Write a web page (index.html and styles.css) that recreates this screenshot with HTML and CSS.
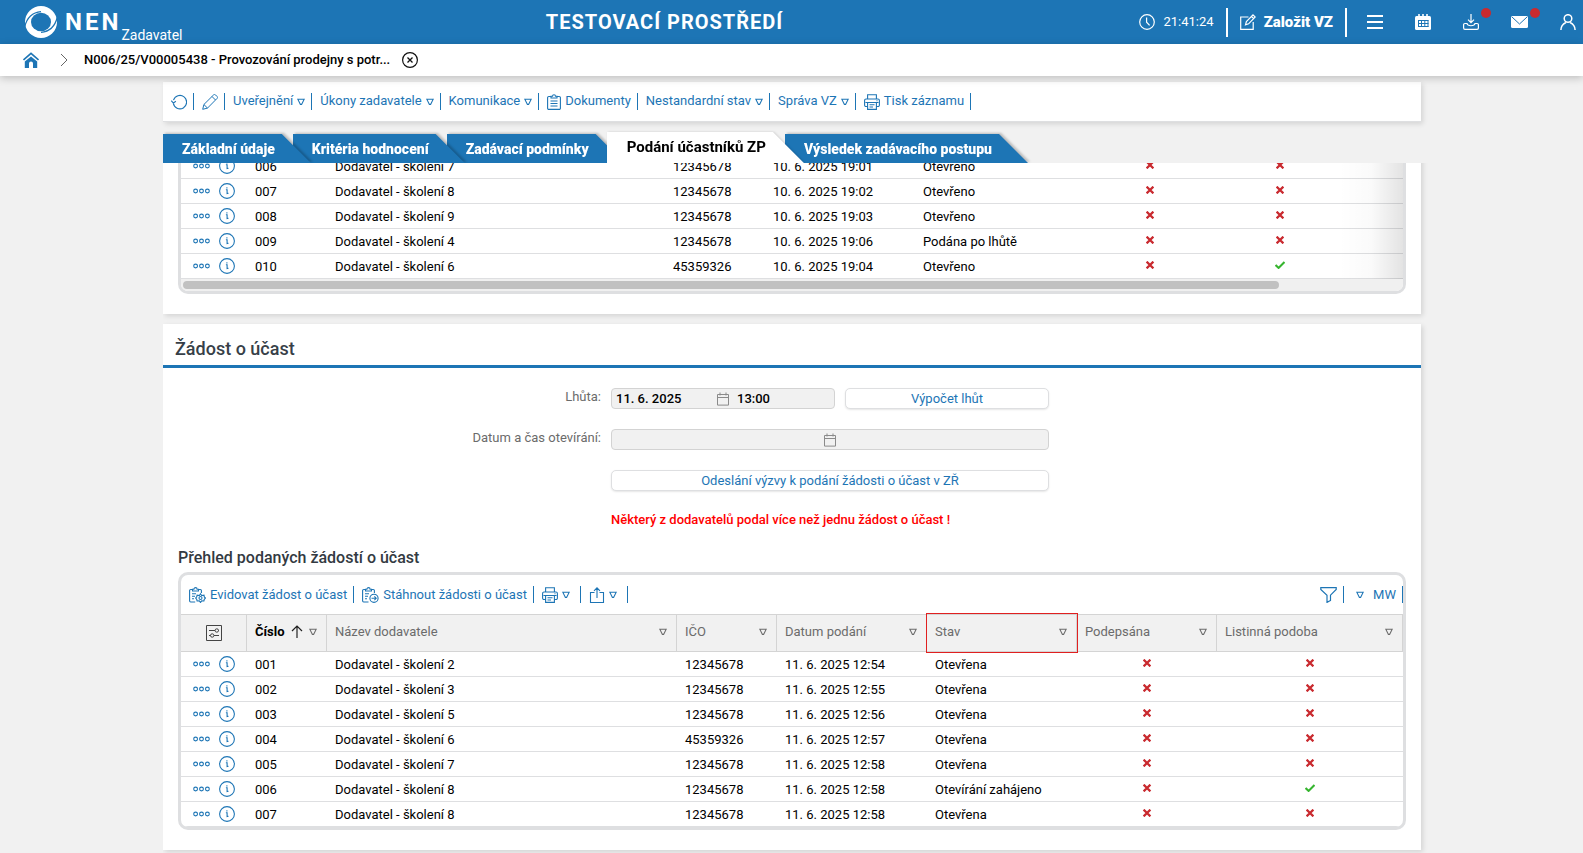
FILE: index.html
```html
<!DOCTYPE html>
<html lang="cs">
<head>
<meta charset="utf-8">
<title>NEN – Podání účastníků ZP</title>
<link rel="stylesheet" href="styles.css">
</head>
<body>
<svg class="sprite" aria-hidden="true">
  <symbol id="tri" viewBox="0 0 8 8"><path d="M.8 1.2h6.4L4.6 6.4H3.4z" fill="none" stroke="currentColor" stroke-width="1.1"/></symbol>
  <symbol id="dots" viewBox="0 0 17 6"><g fill="none" stroke="currentColor" stroke-width="1.1"><circle cx="2.6" cy="3" r="1.9"/><circle cx="8.5" cy="3" r="1.9"/><circle cx="14.4" cy="3" r="1.9"/></g></symbol>
  <symbol id="info" viewBox="0 0 16 16"><circle cx="8" cy="8" r="7.4" fill="none" stroke="currentColor" stroke-width="1.1"/><path d="M6.9 6.8h1.2v3.7l1.4-.3M7.9 4.2v1.2" fill="none" stroke="currentColor" stroke-width="1.1"/></symbol>
  <symbol id="no" viewBox="0 0 10 8"><path d="M1.6.6l6.8 6.8M8.4.6L1.6 7.4" stroke="#c92a2f" stroke-width="2.2" fill="none"/></symbol>
  <symbol id="yes" viewBox="0 0 10 8"><path d="M.6 4l3 2.900L9.500.9" stroke="#36b52f" stroke-width="2.100" fill="none"/></symbol>
  <symbol id="calendar" viewBox="0 0 12 14"><path d="M.5 2.500h11v10.600H.5zM.5 5.500h11M3 .5v3M9 .5v3" fill="none" stroke="currentColor"/></symbol>
  <symbol id="printer" viewBox="0 0 16 16"><g fill="none" stroke="currentColor" stroke-width="1.1"><path d="M3.600 5V.7h8.800V5M3.500 12.500H2A1.400 1.400 0 0 1 .6 11V6.400A1.400 1.400 0 0 1 2 5h12a1.400 1.400 0 0 1 1.400 1.400V11a1.400 1.400 0 0 1-1.400 1.500h-1.500M3.600 8.500h8.800v6.900H3.600zM1.500 8.500h13M5.500 10.800h5M5.500 13h3.500M12.500 6.800h1"/></g></symbol>
  <symbol id="clip" viewBox="0 0 14 16"><g fill="none" stroke="currentColor" stroke-width="1.100"><path d="M4 2.500H1.800A1.200 1.200 0 0 0 .6 3.700v10.500a1.200 1.200 0 0 0 1.200 1.200h10.400a1.200 1.200 0 0 0 1.200-1.200V3.700a1.200 1.200 0 0 0-1.200-1.200H10M4 4V2.200h1.500a1.500 1.500 0 0 1 3 0H10V4zM3.500 7h7M3.500 9.500h7M3.500 12h7"/></g></symbol>
  <symbol id="clip-gear" viewBox="0 0 17 16"><g fill="none" stroke="currentColor" stroke-width="1.100"><path d="M3.500 2.500H1.700A1.100 1.100 0 0 0 .6 3.600v10.200a1.200 1.200 0 0 0 1.100 1.200h4.500M9.500 2.500h1.800a1.100 1.100 0 0 1 1.100 1.100V6M3.500 4V2.200h1.400a1.600 1.600 0 0 1 3.200 0h1.400V4zM3 6.800h4M3 9.300h3M3 11.800h2"/><circle cx="11.500" cy="11" r="1.500"/><path d="M11.500 6.800l1.100 1.700 2.400-.3.300 1.700 1.100 1.100-1.100 1.300-.4 1.700-2.200-.2-1.200 1.600-1.200-1.600-2.200.2-.4-1.700L6.700 11l1-1.100.4-1.700 2.300.3z"/></g></symbol>
  <symbol id="clip-arrow" viewBox="0 0 17 16"><g fill="none" stroke="currentColor" stroke-width="1.100"><path d="M3.500 2.500H1.700A1.100 1.100 0 0 0 .6 3.600v10.200a1.200 1.200 0 0 0 1.100 1.200h4.800M9.500 2.500h1.800a1.100 1.100 0 0 1 1.100 1.100V6M3.500 4V2.200h1.400a1.600 1.600 0 0 1 3.200 0h1.400V4zM3 6.800h4M3 9.300h3M3 11.800h2"/><circle cx="12" cy="11.300" r="4.100"/><path d="M9.500 11.300h4.600M12.400 9.400l1.800 1.900-1.800 1.900"/></g></symbol>
</svg>

<header class="topbar">
  <a class="brand" href="#">
    <svg width="34" height="34" viewBox="0 0 34 34" aria-hidden="true">
      <circle cx="17" cy="17" r="16" fill="#fff"/>
      <ellipse cx="17" cy="17" rx="10" ry="9.300" fill="#1d75b5"/>
      <path d="M.8 21.500C3 12.500 8 7.500 17 6.600M33.200 12.500C31 21.500 26 26.500 17 27.400" fill="none" stroke="#1d75b5" stroke-width="1.200"/>
    </svg>
    <span class="brand-name">NEN</span><span class="brand-role">Zadavatel</span>
  </a>
  <div class="env">TESTOVACÍ PROSTŘEDÍ</div>
  <div class="actions">
    <span class="clock"><svg width="16" height="16" viewBox="0 0 16 16" fill="none" stroke="#fff" stroke-width="1.200"><circle cx="8" cy="8" r="7.300"/><path d="M7.600 3.500v4.700l3 3.200"/></svg>21:41:24</span>
    <button class="create"><svg width="16" height="16" viewBox="0 0 16 16" fill="none" stroke="#fff" stroke-width="1.200"><path d="M8.500 3H.7v12.300h12.500V8M5.500 10.800l.9-3.200L13 .9l2.200 2.100-6.600 6.800zM11.500 2.500l2.100 2.100"/></svg>Založit VZ</button>
    <button class="icon-btn" aria-label="Menu"><svg width="16" height="16" viewBox="0 0 16 16"><path d="M0 2h16M0 8h16M0 14h16" stroke="#fff" stroke-width="2"/></svg></button>
    <button class="icon-btn" aria-label="Kalendář"><svg width="16" height="16" viewBox="0 0 16 16"><path d="M4 0v4M12 0v4M8 0v3" stroke="#fff" stroke-width="1.600"/><rect y="2" width="16" height="14" rx="1.500" fill="#fff"/><path d="M3 6.500h10.500M3 9.500h10.500M3 12.500h10.500M3.500 6v7M6.500 6v7M9.800 6v7M13 6v7" stroke="#1d75b5"/></svg></button>
    <button class="icon-btn" aria-label="Stažené"><svg width="16" height="16" viewBox="0 0 16 16" fill="none" stroke="#fff" stroke-width="1.200"><path d="M8 0v8.500M5 5.700l3 3 3-3M4 9.500H2A1.400 1.400 0 0 0 .6 11v3A1.400 1.400 0 0 0 2 15.400h12a1.400 1.400 0 0 0 1.400-1.400v-3A1.400 1.400 0 0 0 14 9.500h-2c-.5 3-7.500 3-8 0z"/></svg><i class="badge"></i></button>
    <button class="icon-btn" aria-label="Zprávy"><svg width="17" height="16" viewBox="0 0 17 16"><rect y="2" width="17" height="12" rx="1.500" fill="#fff"/><path d="M1 3l7.500 7L16 3" fill="none" stroke="#1d75b5"/></svg><i class="badge"></i></button>
    <button class="icon-btn" aria-label="Uživatel"><svg width="16" height="16" viewBox="0 0 16 16" fill="none" stroke="#fff" stroke-width="1.500"><circle cx="8" cy="4.500" r="3.800"/><path d="M.9 16c0-4 2-6 5-7.500M15.100 16c0-4-2-6-5-7.500"/></svg></button>
  </div>
</header>

<nav class="crumbs" aria-label="Navigace">
  <a href="#" aria-label="Domů"><svg width="16" height="16" viewBox="0 0 16 16" fill="#1d75b5"><path d="M8 4.400l6.200 5.200V16H10v-4.500a2 2 0 0 0-4 0V16H1.800V9.600z"/><path d="M.5 8L8 1.300 15.500 8" fill="none" stroke="#1d75b5" stroke-width="1.600"/></svg></a>
  <svg width="8" height="14" viewBox="0 0 8 14"><path d="M1 1l6 6-6 6" fill="none" stroke="#666"/></svg>
  <span class="crumb">N006/25/V00005438 - Provozování prodejny s potr...</span>
  <button class="close" aria-label="Zavřít"><svg width="16" height="16" viewBox="0 0 16 16" fill="none" stroke="#111"><circle cx="8" cy="8" r="7.400" stroke-width="1.200"/><path d="M5.500 5.500l5 5M10.500 5.500l-5 5" stroke-width="1.300"/></svg></button>
</nav>

<main class="page">
  <div class="toolbar card">
    <button class="tool" aria-label="Obnovit"><svg width="16" height="16" viewBox="0 0 16 16" fill="none" stroke="currentColor" stroke-width="1.100"><path d="M2.300 9.200a6.700 6.700 0 1 0 .2-3M.3 6.700l2.100 2.300 2.500-1.700"/></svg></button>
    <button class="tool" aria-label="Upravit"><svg width="16" height="16" viewBox="0 0 16 16" fill="none" stroke="currentColor"><path d="M.7 15.300l1.200-4.800L11.600.9a1.300 1.300 0 0 1 1.900 0l1.600 1.600a1.300 1.300 0 0 1 0 1.900l-9.600 9.700zM1.900 10.500l3.600 3.600M10 2.500L13.500 6"/></svg></button>
    <button class="tool">Uveřejnění<svg class="tri"><use href="#tri"/></svg></button>
    <button class="tool">Úkony zadavatele<svg class="tri"><use href="#tri"/></svg></button>
    <button class="tool">Komunikace<svg class="tri"><use href="#tri"/></svg></button>
    <button class="tool"><svg width="14" height="16"><use href="#clip"/></svg>Dokumenty</button>
    <button class="tool">Nestandardní stav<svg class="tri"><use href="#tri"/></svg></button>
    <button class="tool">Správa VZ<svg class="tri"><use href="#tri"/></svg></button>
    <button class="tool"><svg width="16" height="16"><use href="#printer"/></svg>Tisk záznamu</button>
  </div>

  <nav class="tabs" aria-label="Záložky">
    <div class="tab"><a href="#">Základní údaje</a></div>
    <div class="tab"><a href="#">Kritéria hodnocení</a></div>
    <div class="tab"><a href="#">Zadávací podmínky</a></div>
    <div class="tab active"><a href="#">Podání účastníků ZP</a></div>
    <div class="tab"><a href="#">Výsledek zadávacího postupu</a></div>
  </nav>

  <div class="scroll">
    <section class="card bids">
      <div class="grid-box fade">
        <table class="grid">
          <colgroup><col class="w66"><col class="w80"><col><col class="w100"><col class="w150"><col class="w170"><col class="w130"><col class="w130"><col class="w58"></colgroup>
          <tbody>
            <tr><td><span class="ops"><svg width="17" height="6"><use href="#dots"/></svg><svg width="16" height="16"><use href="#info"/></svg></span></td><td>006</td><td>Dodavatel - školení 7</td><td>12345678</td><td>10. 6. 2025 19:01</td><td>Otevřeno</td><td class="mark"><svg><use href="#no"/></svg></td><td class="mark"><svg><use href="#no"/></svg></td><td></td></tr>
            <tr><td><span class="ops"><svg width="17" height="6"><use href="#dots"/></svg><svg width="16" height="16"><use href="#info"/></svg></span></td><td>007</td><td>Dodavatel - školení 8</td><td>12345678</td><td>10. 6. 2025 19:02</td><td>Otevřeno</td><td class="mark"><svg><use href="#no"/></svg></td><td class="mark"><svg><use href="#no"/></svg></td><td></td></tr>
            <tr><td><span class="ops"><svg width="17" height="6"><use href="#dots"/></svg><svg width="16" height="16"><use href="#info"/></svg></span></td><td>008</td><td>Dodavatel - školení 9</td><td>12345678</td><td>10. 6. 2025 19:03</td><td>Otevřeno</td><td class="mark"><svg><use href="#no"/></svg></td><td class="mark"><svg><use href="#no"/></svg></td><td></td></tr>
            <tr><td><span class="ops"><svg width="17" height="6"><use href="#dots"/></svg><svg width="16" height="16"><use href="#info"/></svg></span></td><td>009</td><td>Dodavatel - školení 4</td><td>12345678</td><td>10. 6. 2025 19:06</td><td>Podána po lhůtě</td><td class="mark"><svg><use href="#no"/></svg></td><td class="mark"><svg><use href="#no"/></svg></td><td></td></tr>
            <tr><td><span class="ops"><svg width="17" height="6"><use href="#dots"/></svg><svg width="16" height="16"><use href="#info"/></svg></span></td><td>010</td><td>Dodavatel - školení 6</td><td>45359326</td><td>10. 6. 2025 19:04</td><td>Otevřeno</td><td class="mark"><svg><use href="#no"/></svg></td><td class="mark"><svg><use href="#yes"/></svg></td><td></td></tr>
          </tbody>
        </table>
        <div class="hscroll"><div class="thumb"></div></div>
      </div>
    </section>

    <section class="card request">
      <h2>Žádost o účast</h2>
      <form class="form">
        <label for="deadline">Lhůta:</label>
        <div class="pair">
          <div class="field"><input id="deadline" value="11. 6. 2025" readonly><svg width="12" height="14"><use href="#calendar"/></svg><input aria-label="Čas lhůty" value="13:00" readonly></div>
          <button type="button" class="btn">Výpočet lhůt</button>
        </div>
        <label for="opening">Datum a čas otevírání:</label>
        <div class="field"><input id="opening" readonly><svg width="12" height="14"><use href="#calendar"/></svg><input aria-label="Čas otevírání" readonly></div>
        <button type="button" class="btn wide">Odeslání výzvy k podání žádosti o účast v ZŘ</button>
        <p class="warning">Některý z dodavatelů podal více než jednu žádost o účast !</p>
      </form>

      <h3>Přehled podaných žádostí o účast</h3>
      <div class="grid-box">
        <div class="grid-tools">
          <button class="tool"><svg width="17" height="16"><use href="#clip-gear"/></svg>Evidovat žádost o účast</button>
          <button class="tool"><svg width="17" height="16"><use href="#clip-arrow"/></svg>Stáhnout žádosti o účast</button>
          <button class="tool short" aria-label="Tisk"><svg width="16" height="16"><use href="#printer"/></svg><svg class="tri"><use href="#tri"/></svg></button>
          <button class="tool short" aria-label="Export"><svg width="16" height="16" viewBox="0 0 16 16" fill="none" stroke="currentColor" stroke-width="1.100"><path d="M5.500 5.500h-4v10h13v-10h-4M8 11V.8M5 3.800l3-3 3 3"/></svg><svg class="tri"><use href="#tri"/></svg></button>
          <button class="tool push" aria-label="Filtr"><svg width="17" height="16" viewBox="0 0 17 16" fill="none" stroke="currentColor" stroke-width="1.200"><path d="M.8.7h15.400v1.800l-5.700 5.700v5.300l-3.500 1.900V8.200L.8 2.500z"/></svg></button>
          <button class="tool view"><svg class="tri"><use href="#tri"/></svg>MW</button>
        </div>
        <table class="grid">
          <colgroup><col class="w66"><col class="w80"><col><col class="w100"><col class="w150"><col class="w150"><col class="w140"><col class="w186"></colgroup>
          <thead>
            <tr>
              <th class="settings"><svg width="16" height="16" viewBox="0 0 16 16" fill="none" stroke="#444"><path d="M.5.5h15v15H.5zM3 5.500h6M12.500 5.500H13M3 10.500h1.500M8 10.500h5"/><circle cx="10.800" cy="5.500" r="1.700"/><circle cx="6.200" cy="10.500" r="1.700"/></svg></th>
              <th class="sorted"><div class="head"><span>Číslo</span><svg width="12" height="13" viewBox="0 0 12 13" fill="none" stroke="#222" stroke-width="1.200"><path d="M6 13V1M1 6l5-5 5 5"/></svg><svg class="tri"><use href="#tri"/></svg></div></th>
              <th><div class="head"><span>Název dodavatele</span><svg class="tri"><use href="#tri"/></svg></div></th>
              <th><div class="head"><span>IČO</span><svg class="tri"><use href="#tri"/></svg></div></th>
              <th><div class="head"><span>Datum podání</span><svg class="tri"><use href="#tri"/></svg></div></th>
              <th class="marked"><div class="head"><span>Stav</span><svg class="tri"><use href="#tri"/></svg></div></th>
              <th><div class="head"><span>Podepsána</span><svg class="tri"><use href="#tri"/></svg></div></th>
              <th><div class="head"><span>Listinná podoba</span><svg class="tri"><use href="#tri"/></svg></div></th>
            </tr>
          </thead>
          <tbody>
            <tr><td><span class="ops"><svg width="17" height="6"><use href="#dots"/></svg><svg width="16" height="16"><use href="#info"/></svg></span></td><td>001</td><td>Dodavatel - školení 2</td><td>12345678</td><td>11. 6. 2025 12:54</td><td>Otevřena</td><td class="mark"><svg><use href="#no"/></svg></td><td class="mark"><svg><use href="#no"/></svg></td></tr>
            <tr><td><span class="ops"><svg width="17" height="6"><use href="#dots"/></svg><svg width="16" height="16"><use href="#info"/></svg></span></td><td>002</td><td>Dodavatel - školení 3</td><td>12345678</td><td>11. 6. 2025 12:55</td><td>Otevřena</td><td class="mark"><svg><use href="#no"/></svg></td><td class="mark"><svg><use href="#no"/></svg></td></tr>
            <tr><td><span class="ops"><svg width="17" height="6"><use href="#dots"/></svg><svg width="16" height="16"><use href="#info"/></svg></span></td><td>003</td><td>Dodavatel - školení 5</td><td>12345678</td><td>11. 6. 2025 12:56</td><td>Otevřena</td><td class="mark"><svg><use href="#no"/></svg></td><td class="mark"><svg><use href="#no"/></svg></td></tr>
            <tr><td><span class="ops"><svg width="17" height="6"><use href="#dots"/></svg><svg width="16" height="16"><use href="#info"/></svg></span></td><td>004</td><td>Dodavatel - školení 6</td><td>45359326</td><td>11. 6. 2025 12:57</td><td>Otevřena</td><td class="mark"><svg><use href="#no"/></svg></td><td class="mark"><svg><use href="#no"/></svg></td></tr>
            <tr><td><span class="ops"><svg width="17" height="6"><use href="#dots"/></svg><svg width="16" height="16"><use href="#info"/></svg></span></td><td>005</td><td>Dodavatel - školení 7</td><td>12345678</td><td>11. 6. 2025 12:58</td><td>Otevřena</td><td class="mark"><svg><use href="#no"/></svg></td><td class="mark"><svg><use href="#no"/></svg></td></tr>
            <tr><td><span class="ops"><svg width="17" height="6"><use href="#dots"/></svg><svg width="16" height="16"><use href="#info"/></svg></span></td><td>006</td><td>Dodavatel - školení 8</td><td>12345678</td><td>11. 6. 2025 12:58</td><td>Otevírání zahájeno</td><td class="mark"><svg><use href="#no"/></svg></td><td class="mark"><svg><use href="#yes"/></svg></td></tr>
            <tr><td><span class="ops"><svg width="17" height="6"><use href="#dots"/></svg><svg width="16" height="16"><use href="#info"/></svg></span></td><td>007</td><td>Dodavatel - školení 8</td><td>12345678</td><td>11. 6. 2025 12:58</td><td>Otevřena</td><td class="mark"><svg><use href="#no"/></svg></td><td class="mark"><svg><use href="#no"/></svg></td></tr>
          </tbody>
        </table>
      </div>
    </section>
  </div>
</main>
</body>
</html>
```

FILE: styles.css
```css
:root {
  --blue: #1d75b5;
  --line: #dedfe1;
  --page: #f1f1f1;
}

* { box-sizing: border-box; }

body {
  margin: 0;
  background: var(--page);
  color: #000;
  font: 13px/16px Roboto, "Noto Sans", sans-serif;
}

button {
  padding: 0;
  border: 0;
  background: none;
  color: inherit;
  font: inherit;
}

a { color: inherit; text-decoration: none; }
svg { display: block; flex: none; }
.sprite { position: absolute; width: 0; height: 0; }

/* top bar */
.topbar {
  display: grid;
  grid-template-columns: 1fr auto 1fr;
  align-items: center;
  height: 44px;
  background: var(--blue);
  color: #fff;
}
.brand { display: flex; align-items: center; align-self: stretch; padding-left: 24px; }
.brand-name { margin-left: 7px; font-size: 24px; font-weight: 700; letter-spacing: 3px; line-height: 28px; }
.brand-role { align-self: flex-end; padding-bottom: 1px; font-size: 14px; line-height: 16px; }
.env { font-size: 20px; font-weight: 700; letter-spacing: 1px; line-height: 24px; padding-right: 254px; }
.actions { display: flex; justify-content: flex-end; align-items: center; padding-right: 7px; }
.clock { display: flex; align-items: center; gap: 8px; padding-right: 12px; }
.create {
  display: flex;
  align-items: center;
  gap: 8px;
  height: 29px;
  margin-right: 20px;
  padding: 0 12px;
  border: solid #fff;
  border-width: 0 2px;
  font-size: 15px;
  font-weight: 900;
}
.icon-btn { position: relative; margin-left: 32px; }
.create + .icon-btn { margin-left: 0; }
.badge {
  position: absolute;
  top: -6px;
  right: -12px;
  width: 10px;
  height: 10px;
  border-radius: 50%;
  background: #c92a2f;
}

/* breadcrumbs */
.crumbs {
  position: relative;
  display: flex;
  align-items: center;
  height: 32px;
  padding-left: 23px;
  background: #fff;
  box-shadow: 0 2px 8px rgba(0, 0, 0, .22);
}
.crumbs > svg { margin: 0 16px 0 21px; }
.crumb { font-weight: 500; }
.close { margin-left: 12px; }

.page { padding: 0 162px 0 163px; }
.card { background: #fff; box-shadow: 2px 2px 5px rgba(0, 0, 0, .12); }

/* tool rows */
.toolbar {
  display: flex;
  align-items: center;
  height: 40px;
  margin-top: 6px;
  border-bottom: 1px solid var(--line);
}
.tool {
  display: flex;
  align-items: center;
  gap: 4px;
  height: 17px;
  padding: 0 6px 0 8px;
  border-right: 1px solid var(--blue);
  color: var(--blue);
}
.toolbar .tool { padding-bottom: 2px; }
.toolbar .tool > svg:first-child { margin-top: 2px; }
.tri { width: 8px; height: 8px; }

/* tabs */
.tabs { display: flex; align-items: flex-end; height: 41px; padding-top: 8px; overflow: hidden; }
.tab {
  position: relative;
  z-index: 1;
  margin-right: -18px;
  filter: drop-shadow(2px -1px 1px rgba(0, 0, 0, .22));
}
.tab:nth-child(1) { z-index: 3; }
.tab:nth-child(2) { z-index: 2; }
.tab a {
  display: block;
  height: 29px;
  padding: 1px 36px 0 19px;
  background: var(--blue);
  clip-path: polygon(0 0, calc(100% - 29px) 0, 100% 100%, 0 100%);
  color: #fff;
  font-size: 14px;
  font-weight: 900;
  line-height: 29px;
  white-space: nowrap;
}
.tab.active { z-index: 4; margin-right: -19px; filter: drop-shadow(1px 0 1px rgba(0, 0, 0, .15)); }
.tab.active a {
  height: 31px;
  padding: 1px 38px 0 20px;
  background: #fff;
  clip-path: polygon(0 0, calc(100% - 31px) 0, 100% 100%, 0 100%);
  color: #000;
  font-size: 15px;
  font-weight: 700;
}

/* scrolled content */
.scroll { margin-right: -12px; padding: 0 12px 3px 0; overflow: hidden; }
.bids { margin-top: -9px; padding: 0 15px 20px; }
.request { margin-top: 10px; padding-bottom: 20px; }

.grid-box {
  position: relative;
  border: 3px solid var(--line);
  border-radius: 10px;
  overflow: hidden;
}
.bids .grid-box { border-top: 0; border-top-left-radius: 0; border-top-right-radius: 0; }
.fade::after {
  content: "";
  position: absolute;
  top: 0;
  right: 0;
  bottom: 12px;
  width: 64px;
  background: linear-gradient(to right, rgba(0, 0, 0, 0), rgba(0, 0, 0, .02) 50%, rgba(0, 0, 0, .11));
}

.grid { width: 100%; table-layout: fixed; border-collapse: separate; border-spacing: 0; }
.w58 { width: 58px; }
.w66 { width: 66px; }
.w80 { width: 80px; }
.w100 { width: 100px; }
.w130 { width: 130px; }
.w140 { width: 140px; }
.w150 { width: 150px; }
.w170 { width: 170px; }
.w186 { width: 186px; }
.grid td {
  height: 25px;
  padding: 1px 8px 0;
  border-bottom: 1px solid var(--line);
  white-space: nowrap;
}
.grid td.mark { padding: 0 0 3px; }
.mark svg { width: 10px; height: 8px; margin: 0 auto; }
.grid td:first-child { padding: 0 0 0 12px; }
.ops { display: flex; align-items: center; gap: 9px; color: var(--blue); }
.grid th {
  height: 38px;
  padding: 0 9px 3px 8px;
  border: solid #d4d4d4;
  border-width: 1px 1px 1px 0;
  background: var(--page);
  color: #6b6b6b;
  font-weight: 400;
  text-align: left;
}
.grid th.settings { padding: 0 0 0 25px; }
.head { display: flex; align-items: center; justify-content: space-between; }
.grid th.sorted { color: #000; font-weight: 700; }
.sorted .tri { color: #6b6b6b; }
.marked { outline: 1px solid #e02020; }

.hscroll { height: 12px; padding: 2px 2px 0; background: #f0f0f0; }
.thumb { width: 90%; height: 8px; border-radius: 4px; background: #c1c1c1; }

/* request section */
h2 {
  margin: 0;
  padding: 9px 12px 0;
  border-bottom: 3px solid var(--blue);
  color: #373f48;
  font-size: 18px;
  font-weight: 500;
  line-height: 32px;
}
h3 {
  margin: 0 15px;
  color: #333a42;
  font-size: 16px;
  font-weight: 500;
  line-height: 20px;
}
.request .grid-box { margin: 4px 15px 0; }

.form {
  display: grid;
  grid-template-columns: 438px 438px;
  gap: 20px 10px;
  padding: 20px 0 19px;
}
.form label { color: #6b6b6b; line-height: 18px; text-align: right; }
.pair { display: grid; grid-template-columns: 224px 1fr; gap: 10px; }
.field {
  display: grid;
  grid-template-columns: 1fr 12px 1fr;
  align-items: center;
  height: 21px;
  border: 1px solid #d3d3d3;
  border-radius: 4px;
  background: var(--page);
  color: #8a8a8a;
}
.field input {
  width: 100%;
  min-width: 0;
  padding: 0 0 0 4px;
  border: 0;
  background: none;
  color: #000;
  font: 500 13px/19px Roboto, "Noto Sans", sans-serif;
}
.field svg + input { padding-left: 8px; }
.btn {
  height: 21px;
  border: 1px solid var(--line);
  border-radius: 5px;
  background: #fff;
  box-shadow: 0 1px 2px rgba(0, 0, 0, .1);
  color: var(--blue);
}
.wide, .warning { grid-column: 2; }
.warning { margin: 0; color: #f00; font-weight: 500; line-height: 18px; }

.grid-tools { display: flex; align-items: center; height: 39px; }
.tool.short { padding-right: 10px; }
.push { margin-left: auto; }
.view { gap: 9px; padding-left: 12px; }
```
